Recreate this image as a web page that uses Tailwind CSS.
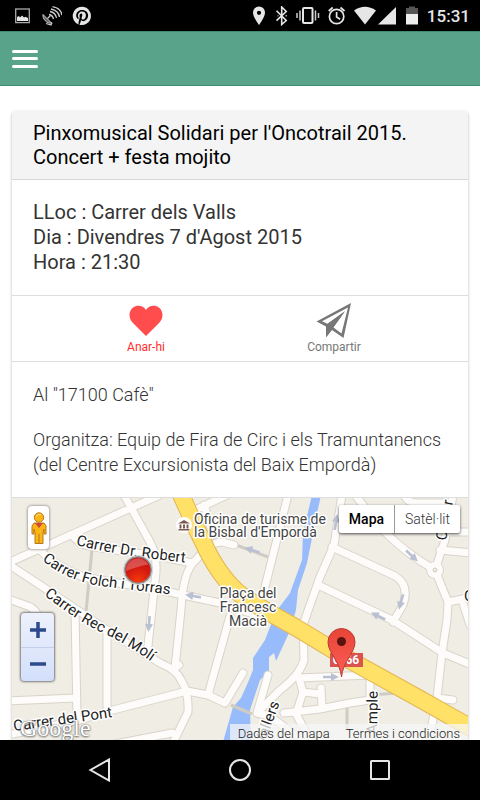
<!DOCTYPE html>
<html lang="ca">
<head>
  <meta charset="UTF-8" />
  <meta name="viewport" content="width=device-width, initial-scale=1.0" />
  <title>Pinxomusical Solidari per l'Oncotrail 2015</title>
  <script src="https://cdn.jsdelivr.net/npm/@tailwindcss/browser@4"></script>
</head>
<body class="flex h-screen flex-col overflow-hidden bg-white font-[Roboto,sans-serif] text-black">
  <!-- Status bar -->
  <div class="flex h-[31px] shrink-0 items-center justify-between bg-black pr-2.5 pl-3 text-[#e6e6e6]">
    <div class="flex items-center gap-2.5">
      <svg class="h-5 w-5" viewBox="0 0 20 20" fill="none">
        <rect x="3.7" y="3" width="13.6" height="13.6" stroke="#aaa" stroke-width="1.3" />
        <path d="M5 15v-4l2-1 1 1.500 2-2 2 2 1.500-.8 2.500 1.300v3z" fill="#e6e6e6" />
      </svg>
      <svg class="h-5 w-5" viewBox="0 0 20 20" fill="none" stroke="#ccc" stroke-width="1.300">
        <path d="M1 8.500c-.6 4.500 4 9.500 8.500 8.500z" fill="#666" stroke-width="1" />
        <path d="M5.500 12.500l3-3M4 17.500l5 1.500 1-2.500" />
        <path d="M7 8.500q3.500.5 4.500 4.500M8 5.500q5.500 1 6.500 6.500M9 3q7.500 1.500 8.500 8M10.500.7q8.500 1.500 9.500 8.500" />
      </svg>
      <svg class="h-5 w-5" viewBox="0 0 24 24" fill="#e6e6e6">
        <path d="M12 .9a11 11 0 0 0-4 21.300c-.1-.9-.2-2.300 0-3.300l1.300-5.500s-.3-.6-.3-1.600c0-1.500.9-2.700 2-2.700.9 0 1.400.7 1.400 1.500 0 1-.6 2.400-.9 3.700-.3 1.100.6 2 1.700 2 2 0 3.500-2.100 3.500-5.100 0-2.700-1.900-4.500-4.600-4.500a4.800 4.800 0 0 0-5 4.800c0 .9.400 2 .8 2.500l.1.300-.3 1.300c-.1.200-.2.300-.4.200-1.400-.7-2.300-2.700-2.300-4.300 0-3.500 2.600-6.800 7.400-6.800 3.900 0 6.900 2.800 6.900 6.500 0 3.800-2.400 7-5.800 7-1.100 0-2.200-.6-2.600-1.300l-.7 2.700c-.2 1-.9 2.200-1.400 2.900A11 11 0 1 0 12 .9z" />
      </svg>
    </div>
    <div class="flex items-center">
      <svg class="h-5 w-[150px]" viewBox="250 6 150 20" fill="#e6e6e6">
        <path d="M258 6.500a6 6 0 0 0-6 6.200C252 17 258 25 258 25s6-8 6-12.300a6 6 0 0 0-6-6.200zm0 4.200a2.100 2.100 0 1 1 0 4.200 2.100 2.100 0 0 1 0-4.200z" fill-rule="evenodd" />
        <path d="M275.500 10.800l9.700 9.700-4.500 4V7l4.500 4.500-9.700 9.200" fill="none" stroke="#e6e6e6" stroke-width="1.600" />
        <path d="M276.500 15.700h1M284.500 15.700h1.500" stroke="#aaa" stroke-width="1.500" />
        <rect x="302" y="8" width="9.500" height="15" rx="1" fill="none" stroke="#e6e6e6" stroke-width="2" />
        <path d="M299 10.500v10M296 13v5M314.500 10.500v10M317.500 13v5" stroke="#ccc" stroke-width="1.500" />
        <g fill="none" stroke="#e6e6e6" stroke-width="1.700">
          <circle cx="335.600" cy="16.500" r="7.200" />
          <path d="M335.600 12v5l3.500 2.200M327.700 11l4-3.500M343.500 11l-4-3.500" />
        </g>
        <path d="M353 10.500q11-7.500 22 0L364 24.500z" />
        <path d="M377 24.500L395 7v17.500z" />
      </svg>
      <svg class="h-5 w-[18px]" viewBox="400 6 18 20">
        <path d="M405 14.500V8h3V6.500h6V8h3v6.500z" fill="#555" />
        <path d="M405 14h12v10.500h-12z" fill="#eee" />
      </svg>
      <span class="ml-2 text-[17px] leading-5 font-medium">15:31</span>
    </div>
  </div>

  <!-- App header -->
  <header class="flex h-[55px] shrink-0 items-center border-y border-[#3f8c72] bg-[#5aa38b] px-3">
    <button type="button" aria-label="Menú" class="flex h-[18px] w-[26px] flex-col justify-between">
      <span class="h-[3px] w-full rounded-xs bg-white"></span>
      <span class="h-[3px] w-full rounded-xs bg-white"></span>
      <span class="h-[3px] w-full rounded-xs bg-white"></span>
    </button>
  </header>

  <main class="flex min-h-0 flex-1 flex-col px-3 pt-[25px]">
    <article class="flex min-h-0 flex-1 flex-col overflow-hidden rounded-t-sm shadow-[0_1px_3px_rgba(0,0,0,0.3)]">
      <h1 class="border-b border-[#d8d8d8] bg-[#f4f4f4] px-[21px] py-2.5 text-xl leading-6">Pinxomusical Solidari per l'Oncotrail 2015.<br />Concert + festa mojito</h1>

      <div class="border-b border-[#ddd] px-[21px] py-5 text-xl leading-[25px] text-[#333]">
        <p>LLoc : Carrer dels Valls</p>
        <p>Dia : Divendres 7 d'Agost 2015</p>
        <p>Hora : 21:30</p>
      </div>

      <div class="grid grid-cols-2 border-b border-[#ddd] px-10 pt-[7px] pb-1.5 text-xs leading-4">
        <button type="button" class="flex flex-col items-center text-[#ff2d2d]">
          <svg class="h-9 w-9" viewBox="0 0 36 36" fill="#ff4d4d">
            <path d="M18 33L4.500 19.500C-.5 14 1 5.500 7.500 3.200 11.500 2 15.500 3 18 7c2.500-4 6.500-5 10.500-3.800C35 5.500 36.500 14 31.500 19.500z" />
          </svg>
          <span>Anar-hi</span>
        </button>
        <button type="button" class="flex flex-col items-center text-[#777]">
          <svg class="h-9 w-9" viewBox="0 0 36 36" fill="#777">
            <path d="M35 0L.5 18.500l9.500 5v11l6-7.500 11.500 8zM32 4.500L25.500 30.500 17.500 24.500 29 8 11.500 20.800 6 18.200z" fill-rule="evenodd" />
            <path d="M28.500 9L11.500 21l-1 12 6-8z" />
          </svg>
          <span>Compartir</span>
        </button>
      </div>

      <div class="space-y-5 border-b border-[#ddd] px-[21px] py-5 text-lg leading-[25px] font-light text-[#333]">
        <p>Al "17100 Cafè"</p>
        <p>Organitza: Equip de Fira de Circ i els Tramuntanencs (del Centre Excursionista del Baix Empordà)</p>
      </div>

      <!-- Map -->
      <section aria-label="Mapa" class="relative min-h-0 flex-1 overflow-hidden bg-[#f0ede5]">
        <svg class="block h-full w-full" viewBox="12 498 456 242" preserveAspectRatio="xMidYMid slice">
          <defs>
            <g id="roads" fill="none" stroke-linecap="round" stroke-linejoin="round">
              <path d="M8 563L75 533 160 495M124 495L150 542Q157 555 156 572L147 655" />
              <path d="M8 564L43 587 110 632 160 663Q177 670 181 680 189 692 188 712L172 745" />
              <path d="M39 549Q55 566 83 577L160 590 220 603 262 617" />
              <path d="M72 535Q80 546 95 547L157 556 192 563" />
              <path d="M8 599L28 606Q38 610 38 620M75 610L77 715M107 630L107 710M8 701L76 698" />
              <path d="M8 735L80 720 113 710 160 698 187 691 208 695 225 703 243 673M110 745L172 733" />
              <path d="M179 665L175 668 181 610Q183 570 196 560 210 542 222 542L234 545M193 511L227 495M204 505L213 535" />
              <path d="M288 495L263 595M230 616L208 695" />
              <path d="M342 495L334 545 320 577 303 625 304 660Q300 675 280 690 265 705 257 713L268 675M257 713L270 716 295 735" />
              <path d="M332 547L395 576Q410 585 403 605L393 622M318 585L392 620 443 653 472 665" />
              <path d="M355 495L383 530Q405 553 435 570L445 540 453 495M440 550L472 553M448 532L472 532M404 495Q408 504 420 503L450 503" />
              <path d="M435 570L448 602 472 597M448 602L447 620 442 653 437 698 431 730M437 698L453 700M462 600L470 625" />
              <path d="M299 678L370 675 370 700 350 703 320 709 284 713M299 678L303 692 320 694M303 692L296 714 310 740M321 688L322 708" />
            </g>
            <g id="arrow"><path d="M-8-1.300H0V-4L8 0 0 4V1.300H-8z" fill="#b9c0d2" /></g>
            <radialGradient id="dot" cx="50%" cy="95%" r="90%">
              <stop offset="0" stop-color="#f63a0c" />
              <stop offset=".6" stop-color="#d41a10" />
              <stop offset="1" stop-color="#c81010" />
            </radialGradient>
            <linearGradient id="pin" x2="0" y2="1">
              <stop offset="0" stop-color="#e84438" />
              <stop offset="1" stop-color="#fc5f55" />
            </linearGradient>
          </defs>
          <rect x="12" y="498" width="456" height="242" fill="#f0ede5" />
          <path d="M312 495L303 533 302 560 290 593 278 609 270 627 265 640 253 658 253 670 249 680 241 698 233 707 223 742H251L250 710 260 680 269 671 269 657 274 653 276 661 289 633 296 610 298 590 307 563 315 523 321 495z" fill="#98bcfb" />
          <path d="M92 549L86 612M236 545L268 557M231 705L252 714M371 695L397 693M371 700L347 701V730" fill="none" stroke="#cfccc3" stroke-width="3" />
          <use href="#roads" stroke="#d9d3c9" stroke-width="9" />
          <circle cx="435" cy="570" r="9" fill="#d9d3c9" />
          <use href="#roads" stroke="#fdfcfa" stroke-width="7" />
          <circle cx="435" cy="570" r="8" fill="#fdfcfa" />
          <circle cx="435" cy="570" r="2" fill="#f0ede5" stroke="#cfc9be" />
          <g fill="none">
            <path d="M179 490Q193 522 203 542 219 577 241 595 260 608 295 627L353 662 420 699 475 730" stroke="#e3b550" stroke-width="18" />
            <path d="M179 490Q193 522 203 542 219 577 241 595 260 608 295 627L353 662 420 699 475 730" stroke="#ffe168" stroke-width="16" />
          </g>
          <use href="#arrow" transform="translate(412 556) rotate(43)" />
          <use href="#arrow" transform="translate(401 602) rotate(106)" />
          <use href="#arrow" transform="translate(378 616) rotate(206)" />
          <use href="#arrow" transform="translate(193 596) rotate(190)" />
          <use href="#arrow" transform="translate(252 550) rotate(198)" />
          <use href="#arrow" transform="translate(149 624) rotate(95)" />
          <use href="#arrow" transform="translate(336 522) rotate(-80)" />
          <use href="#arrow" transform="translate(331 677)" />

          <g class="text-[14px]" fill="#222" stroke="#fff" stroke-width="3" stroke-linejoin="round" paint-order="stroke">
            <path id="robert" d="M76 545Q125 557 200 564" fill="none" stroke="none" />
            <path id="folch" d="M42 560Q65 580 100 586L190 597" fill="none" stroke="none" />
            <path id="rec" d="M44 595Q75 620 105 634T175 679" fill="none" stroke="none" />
            <g class="text-[15px]">
              <text><textPath href="#robert">Carrer Dr. Robert</textPath></text>
              <text><textPath href="#folch">Carrer Folch i Torras</textPath></text>
              <text><textPath href="#rec">Carrer Rec del Molí</textPath></text>
              <text transform="translate(14 731) rotate(-8)">Carrer del Pont</text>
              <text transform="translate(264 746) rotate(-70)">Vallers</text>
              <text transform="translate(377 734) rotate(-89)">Ample</text>
              <text transform="translate(446 541) rotate(-80)">Carrer</text>
              <text x="464" y="601">C</text>
            </g>
            <g fill="#444">
              <text x="194" y="524">Oficina de turisme de</text>
              <text x="194" y="537">la Bisbal d'Empordà</text>
              <g text-anchor="middle">
                <text x="248" y="598">Plaça del</text>
                <text x="248" y="612">Francesc</text>
                <text x="248" y="626">Macià</text>
              </g>
            </g>
          </g>

          <circle cx="184" cy="525" r="8" fill="#fff" />
          <path d="M178 523.500l6-3.500 6 3.500zM179.500 524.500h2v4h-2zM183 524.500h2v4h-2zM186.500 524.500h2v4h-2zM178.500 529h11v1.500h-11z" fill="#7d5a50" />

          <circle cx="138" cy="570" r="14.500" fill="#8d8d8d" stroke="#ddd" stroke-width="1" />
          <circle cx="138" cy="570" r="12.500" fill="url(#dot)" />
          <path d="M126 571a12 12 0 0 1 22.500-6.500Q138 566 126 571z" fill="#fff" fill-opacity=".25" />

          <rect x="330" y="653" width="33" height="14" fill="#d9534f" />
          <text x="346" y="664" text-anchor="middle" class="text-[12px] font-bold" fill="#fff">C-66</text>
          <path d="M341.500 677C340 661 328 653 328 642a13.500 13.500 0 0 1 27 0C355 653 343 661 341.500 677z" fill="url(#pin)" stroke="#b83b33" />
          <circle cx="341.500" cy="641.500" r="4.500" fill="#5a130f" />
        </svg>

        <button type="button" aria-label="Street View" class="absolute top-2 left-4 flex h-[43px] w-[21px] items-center justify-center rounded-sm bg-white shadow-[0_0_3px_rgba(0,0,0,0.6)]">
          <svg class="h-8 w-4" viewBox="0 0 16 32" fill="#fbb515" stroke="#b8791a" stroke-width="1">
            <path d="M3 11h10l2 3v8h-2v-5l-1 4v10.500H4V21l-1-4v5H1v-8z" />
            <path d="M4 11h8l-4 5z" fill="#d5443a" stroke="none" />
            <path d="M8 22v9" />
            <circle cx="8" cy="5.500" r="4.700" />
            <path d="M5 4.500q2-3 5-2" fill="none" stroke="#ffe08a" />
          </svg>
        </button>

        <div class="absolute top-[114px] left-2 flex h-[70px] w-[35px] flex-col divide-y divide-[#c3cfea] overflow-hidden rounded border border-[#999] bg-linear-to-b from-[#edf1fb] to-[#d3dffb] shadow-[0_0_2px_rgba(0,0,0,0.5)]">
          <button type="button" aria-label="Amplia" class="flex flex-1 items-center justify-center">
            <svg class="h-4 w-4" viewBox="0 0 16 16" stroke="#2c4a8c" stroke-width="3.500"><path d="M0 8h16M8 0v16" /></svg>
          </button>
          <button type="button" aria-label="Redueix" class="flex flex-1 items-center justify-center">
            <svg class="h-4 w-4" viewBox="0 0 16 16" stroke="#2c4a8c" stroke-width="3.500"><path d="M0 8h16" /></svg>
          </button>
        </div>

        <div class="absolute top-[7px] right-2 flex h-[28px] divide-x divide-[#999] rounded-xs bg-white text-sm leading-4 shadow-[0_1px_3px_rgba(0,0,0,0.7)]">
          <button type="button" class="px-2.5 font-medium">Mapa</button>
          <button type="button" class="px-2.5 font-light text-[#333]">Satèl·lit</button>
        </div>

        <a href="#" class="absolute -bottom-0.5 left-2 font-['Liberation_Serif',serif] text-2xl leading-7 text-white [text-shadow:0_0_2px_#555,0_1px_2px_#777]">Google</a>
        <div class="absolute right-0 bottom-0 flex h-4 gap-4 overflow-hidden bg-[#f5f5f5]/75 pr-2 pl-2 text-[13px] leading-5 font-light text-[#222]">
          <a href="#">Dades del mapa</a>
          <a href="#">Termes i condicions</a>
        </div>
      </section>
    </article>
  </main>

  <!-- System navigation -->
  <nav class="z-10 flex h-[60px] shrink-0 items-center justify-center gap-[116px] bg-black">
    <button type="button" aria-label="Enrere">
      <svg class="h-6 w-6" viewBox="0 0 24 24" fill="none" stroke="#e6e6e6" stroke-width="2"><path d="M21 1.500v21L2.500 12z" /></svg>
    </button>
    <button type="button" aria-label="Inici">
      <svg class="h-6 w-6" viewBox="0 0 24 24" fill="none" stroke="#e6e6e6" stroke-width="2"><circle cx="12" cy="12" r="10" /></svg>
    </button>
    <button type="button" aria-label="Recents">
      <svg class="h-6 w-6" viewBox="0 0 24 24" fill="none" stroke="#e6e6e6" stroke-width="2"><rect x="3" y="3" width="18" height="18" rx=".5" /></svg>
    </button>
  </nav>
</body>
</html>
